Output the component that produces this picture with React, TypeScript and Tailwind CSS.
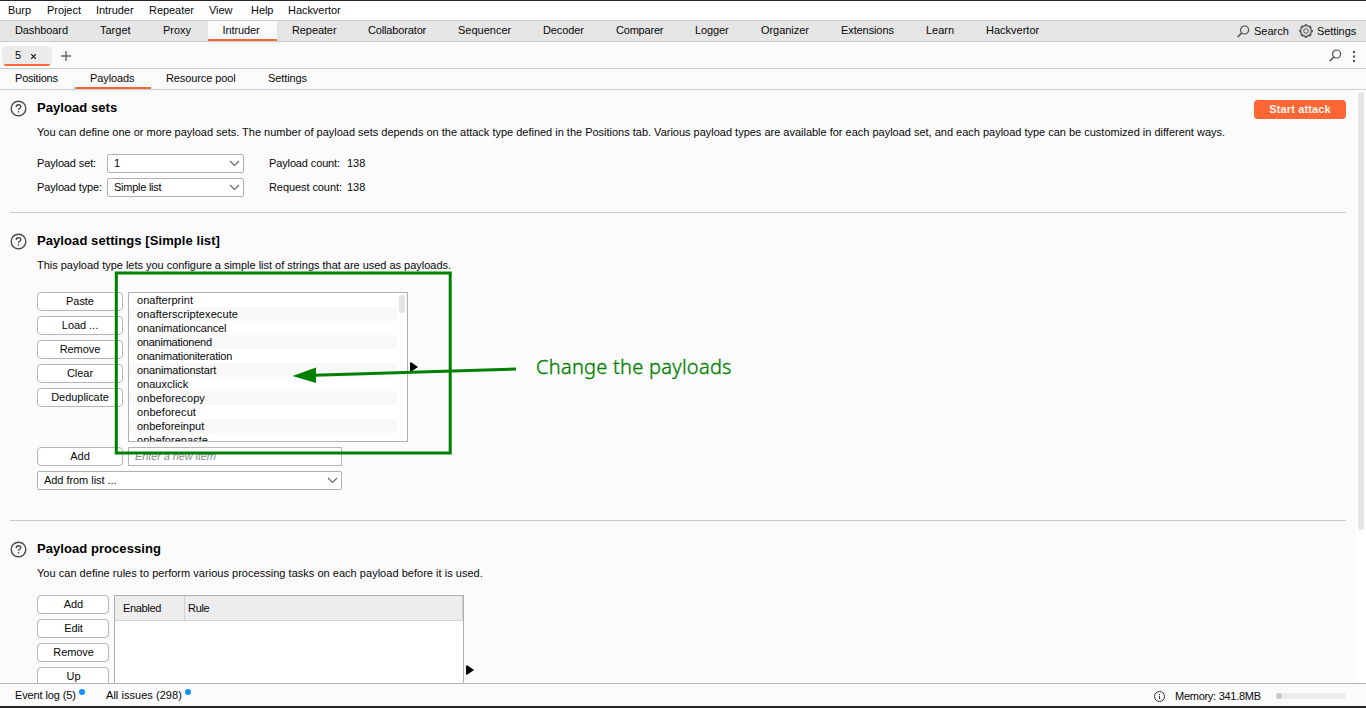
import React from 'react';

const menu: [string, string][] = [
  ['Burp', 'w-[39px]'], ['Project', 'w-[49px]'], ['Intruder', 'w-[53px]'], ['Repeater', 'w-[60px]'],
  ['View', 'w-[42px]'], ['Help', 'w-[37px]'], ['Hackvertor', 'w-[60px]'],
];

const tools: [string, string][] = [
  ['Dashboard', 'w-[84px] pl-[14px] tracking-[-0.1px]'], ['Target', 'w-[63px] pl-[15px]'], ['Proxy', 'w-[60px] pl-[15px]'],
  ['Intruder', 'w-[69px] pl-[14.5px] tracking-[-0.1px]'], ['Repeater', 'w-[76px] pl-[15px] tracking-[-0.1px]'],
  ['Collaborator', 'w-[90px] pl-[15px] tracking-[-0.15px]'], ['Sequencer', 'w-[85px] pl-[15px]'],
  ['Decoder', 'w-[73px] pl-[15px] tracking-[-0.1px]'], ['Comparer', 'w-[79px] pl-[15px] tracking-[-0.2px]'],
  ['Logger', 'w-[66px] pl-[15px] tracking-[-0.1px]'], ['Organizer', 'w-[80px] pl-[15px] tracking-[-0.05px]'],
  ['Extensions', 'w-[85px] pl-[15px] tracking-[-0.1px]'], ['Learn', 'w-[60px] pl-[15px]'],
  ['Hackvertor', 'w-[85px] pl-[15px]'],
];

const payloads: [string, string][] = [
  ['onafterprint', 'tracking-[0.03px]'], ['onafterscriptexecute', 'tracking-[0.1px]'],
  ['onanimationcancel', 'tracking-[-0.14px]'], ['onanimationend', 'tracking-[-0.25px]'],
  ['onanimationiteration', 'tracking-[-0.2px]'], ['onanimationstart', 'tracking-[-0.13px]'],
  ['onauxclick', ''], ['onbeforecopy', 'tracking-[0.11px]'], ['onbeforecut', 'tracking-[0.08px]'],
  ['onbeforeinput', ''], ['onbeforepaste', 'tracking-[0.05px]'],
];

function Magnifier({ className = '' }: { className?: string }) {
  return (
    <svg className={className} width="13" height="13" viewBox="0 0 13 13" fill="none" stroke="#4a4a4a" strokeWidth="1.2">
      <circle cx="7.6" cy="5" r="4" />
      <path d="M4.7 7.9L0.7 12" strokeWidth="1.5" />
    </svg>
  );
}

function Gear() {
  const teeth = [0, 45, 90, 135, 180, 225, 270, 315];
  return (
    <svg width="14" height="14" viewBox="-7 -7 14 14" fill="none" stroke="#555" strokeWidth="1">
      <circle r="5.3" strokeWidth="1.2" />
      <circle r="2.3" />
      {teeth.map((a) => <path key={a} d="M-1.3 -5.4L-1 -6.3H1L1.3 -5.4" transform={`rotate(${a})`} />)}
    </svg>
  );
}

function HelpIcon() {
  return (
    <svg className="mt-[3px] shrink-0" width="17" height="17" viewBox="0 0 17 17" fill="none" stroke="#4a4a4a" strokeWidth="1.4">
      <circle cx="8.5" cy="8.5" r="7.3" />
      <path d="M6.2 6.9C6.2 5.4 7.2 4.7 8.5 4.7S10.8 5.5 10.8 6.8C10.8 8.3 8.5 8.3 8.5 9.9" />
      <path d="M8.5 11.1V12.5" />
    </svg>
  );
}

function Chevron() {
  return (
    <svg width="11" height="7" viewBox="0 0 11 7" fill="none" stroke="#666" strokeWidth="1.1">
      <path d="M1 1L5.5 5.5L10 1" />
    </svg>
  );
}

function Select({ text, className }: { text: string; className: string }) {
  return (
    <div className={`flex h-[19px] items-center justify-between rounded-[2px] border border-[#b4afb1] bg-white pr-[3px] pl-[6px] ${className}`}>
      <span className="-mt-[2px]">{text}</span>
      <Chevron />
    </div>
  );
}

function Button({ text, className }: { text: string; className: string }) {
  return (
    <button className={`flex h-[19px] shrink-0 items-center justify-center rounded-[4px] border border-[#b5b5b5] bg-white pb-px ${className}`}>
      {text}
    </button>
  );
}

function Section({ title, note, titleClass, noteClass, className, children }: {
  title: string; note: string; titleClass: string; noteClass: string; className: string; children: React.ReactNode;
}) {
  return (
    <section className={`ml-[10px] flex w-[1336px] shrink-0 ${className}`}>
      <HelpIcon />
      <div className="ml-[10px] flex-1">
        <h2 className={`mt-[3px] h-4 text-[13px] leading-4 font-bold text-black ${titleClass}`}>{title}</h2>
        <p className={`mt-[10px] h-3 leading-3 ${noteClass}`}>{note}</p>
        {children}
      </div>
    </section>
  );
}

function Expander({ className }: { className: string }) {
  return (
    <svg className={className} width="9" height="10" viewBox="0 0 9 10" fill="#000">
      <path d="M0 0.5H1.5L8 5L1.5 9.5H0Z" />
    </svg>
  );
}

export default function App() {
  return (
    <div className="relative flex h-[708px] w-[1366px] flex-col overflow-hidden border-t border-b-2 border-t-[#29252a] border-b-[#242424] bg-[#fbfbfb] font-['Liberation_Sans',sans-serif] text-[11px] leading-3 whitespace-pre text-[#080808]">
      <nav className="flex h-5 shrink-0 items-start border-b border-[#c8cccc] bg-white pt-[3px] pl-2 tracking-[-0.05px]">
        {menu.map(([t, w]) => <span key={t} className={w}>{t}</span>)}
      </nav>

      <nav className="flex h-[21px] shrink-0 border-b border-[#c8cccc] bg-[#e5e5e5]">
        <div className="flex flex-1 pl-px">
          {tools.map(([t, w], i) => (
            <div key={t + i} className={`h-5 pt-[3px] ${w} ${t === 'Intruder' ? 'border-b-2 border-[#ff6633] bg-[#fbfbfb]' : ''}`}>{t}</div>
          ))}
        </div>
        <div className="flex h-5 items-center">
          <Magnifier className="mr-1" />
          <span className="w-[45px]">Search</span>
          <Gear />
          <span className="ml-1 w-[49px] tracking-[-0.08px]">Settings</span>
        </div>
      </nav>

      <div className="flex h-[27px] shrink-0 items-start border-b border-[#c8cccc] pl-[2px]">
        <div className="mt-1 flex h-5 w-[50px] flex-col rounded-[6px] bg-[#ebebeb]">
          <div className="flex h-[18px] items-center pl-[13px]">
            <span className="w-[16px]">5</span>
            <svg className="mt-[2px]" width="5" height="5" viewBox="0 0 5 5" stroke="#111" strokeWidth="1.1"><path d="M0 0L5 5M5 0L0 5" /></svg>
          </div>
          <div className="mx-[2px] h-[2px] shrink-0 rounded-b-[2px] bg-[#ff6633]" />
        </div>
        <svg className="mt-[9px] ml-[9px]" width="10" height="10" viewBox="0 0 10 10" stroke="#666" strokeWidth="1.4"><path d="M0 5H10M5 0V10" /></svg>
        <div className="mt-[7px] ml-auto flex items-center pr-[10px]">
          <Magnifier />
          <svg className="mt-px ml-[11px]" width="3" height="11" viewBox="0 0 3 11" fill="#444"><path d="M0 0h2v2h-2zM0 4.5h2v2h-2zM0 9h2v2h-2z" /></svg>
        </div>
      </div>

      <nav className="flex h-[21px] shrink-0 border-b border-[#c8cccc] tracking-[-0.1px]">
        <span className="h-5 w-[75px] pt-[3px] pl-[15px] tracking-[-0.2px]">Positions</span>
        <span className="h-5 w-[76px] border-b-2 border-[#ff6633] pt-[3px] pl-[15px]">Payloads</span>
        <span className="h-5 w-[102px] pt-[3px] pl-[15px]">Resource pool</span>
        <span className="h-5 pt-[3px] pl-[15px]">Settings</span>
      </nav>

      <div className="flex h-[593px] shrink-0 overflow-hidden">
        <main className="flex w-[1356px] shrink-0 flex-col">
          <div className="flex h-[122px] shrink-0">
            <Section
              title="Payload sets"
              note="You can define one or more payload sets. The number of payload sets depends on the attack type defined in the Positions tab. Various payload types are available for each payload set, and each payload type can be customized in different ways."
              titleClass="tracking-[0.06px]"
              noteClass="tracking-[-0.009px]"
              className="mt-[7px]"
            >
              <div className="mt-[16px] grid w-[400px] grid-cols-[70px_162px_78px_40px] items-center gap-y-[5px]">
                <span className="-mt-[2px] tracking-[-0.13px]">Payload set:</span><Select text="1" className="w-[137px]" /><span className="-mt-[2px] tracking-[-0.13px]">Payload count:</span><span className="-mt-[2px]">138</span>
                <span className="-mt-[2px] tracking-[-0.13px]">Payload type:</span><Select text="Simple list" className="w-[137px] tracking-[-0.25px]" /><span className="-mt-[2px] tracking-[-0.08px]">Request count:</span><span className="-mt-[2px]">138</span>
              </div>
            </Section>
            <button className="mt-[10px] -ml-[92px] h-[19px] w-[92px] shrink-0 rounded-[4px] bg-[#ff6633] pb-px font-bold tracking-[0.15px] text-[#fff3ee]">Start attack</button>
          </div>
          <hr className="ml-[10px] w-[1336px] shrink-0 border-[#c9c9c9]" />

          <Section
            title="Payload settings [Simple list]"
            note="This payload type lets you configure a simple list of strings that are used as payloads."
            titleClass="tracking-[0.08px]"
            noteClass="tracking-[-0.02px]"
            className="mt-[17px] h-[290px]"
          >
            <div className="mt-[21px] flex">
              <div className="flex w-[91px] flex-col gap-[5px]">
                {['Paste', 'Load ...', 'Remove', 'Clear', 'Deduplicate'].map((t) => <Button key={t} text={t} className="w-[86px] tracking-[-0.05px]" />)}
              </div>
              <div className="flex h-[150px] w-[280px] overflow-hidden border border-[#b0b0b0] bg-white">
                <ul className="w-[268px] shrink-0">
                  {payloads.map(([p, c]) => <li key={p} className={`h-[14px] pt-px pl-2 even:bg-[#f8f8f8] ${c}`}>{p}</li>)}
                </ul>
                <div className="mt-[2px] ml-[2px] h-[18px] w-[6px] rounded-full bg-[#e4e4e4]" />
              </div>
              <Expander className="mt-[70px] ml-[2px]" />
            </div>
            <div className="mt-[5px] flex gap-[5px]">
              <Button text="Add" className="w-[86px]" />
              <div className="h-[19px] w-[214px] border border-[#b5b5b5] bg-white pt-[2px] pl-[6px] tracking-[-0.1px] text-[#8c8c8c] italic">Enter a new item</div>
            </div>
            <Select text="Add from list ..." className="mt-[5px] w-[305px] tracking-[-0.05px]" />
          </Section>
          <hr className="ml-[10px] w-[1336px] shrink-0 border-[#c9c9c9]" />

          <Section
            title="Payload processing"
            note="You can define rules to perform various processing tasks on each payload before it is used."
            titleClass="tracking-[0.06px]"
            noteClass="tracking-[0.025px]"
            className="mt-[17px]"
          >
            <div className="mt-[16px] flex">
              <div className="flex w-[77px] flex-col gap-[5px]">
                {['Add', 'Edit', 'Remove', 'Up'].map((t) => <Button key={t} text={t} className="w-[72px] pl-px tracking-[-0.1px]" />)}
              </div>
              <div className="h-[120px] w-[350px] border border-[#b0b0b0] bg-white">
                <div className="flex h-[25px] border-r border-b border-[#d0d0d0] bg-[#ededed] pt-[6px]">
                  <span className="-mt-[6px] w-[70px] border-r border-[#d0d0d0] pt-[6px] pl-2 tracking-[-0.35px]">Enabled</span>
                  <span className="pl-[3px] tracking-[-0.3px]">Rule</span>
                </div>
              </div>
              <Expander className="mt-[70px] ml-[2px]" />
            </div>
          </Section>
        </main>
        <div className="w-[10px] bg-white pt-[2px] pl-[2px]">
          <div className="h-[438px] w-[6px] rounded-full bg-[#e4e4e4]" />
        </div>
      </div>

      <footer className="flex h-[23px] shrink-0 items-start border-t border-[#b4b4b4] pl-[15px]">
        <span className="mt-[5px] w-[64px] tracking-[-0.12px]">Event log (5)</span>
        <i className="mt-[5px] h-[6px] w-[6px] rounded-full bg-[#0a93ff]" />
        <span className="mt-[5px] ml-[21px] w-[79px] tracking-[0.04px]">All issues (298)</span>
        <i className="mt-[5px] h-[6px] w-[6px] rounded-full bg-[#0a93ff]" />
        <div className="ml-auto flex pr-5">
          <svg className="mt-[7px]" width="11" height="11" viewBox="0 0 11 11" fill="none" stroke="#333" strokeWidth="1"><circle cx="5.5" cy="5.5" r="5" /><path d="M5.5 4.8V8.2M5.5 2.8V3.9" /></svg>
          <span className="mt-[6px] ml-[10px] w-[101px] tracking-[-0.27px]">Memory: 341.8MB</span>
          <div className="mt-[9px] h-[6px] w-[70px] rounded-full bg-[#ececec]"><div className="h-[6px] w-[6px] rounded-full bg-[#c8c8c8]" /></div>
        </div>
      </footer>

      <svg className="absolute top-[-1px] left-0" width="540" height="480" viewBox="0 0 540 480" fill="none" stroke="#008000">
        <rect x="116.3" y="273" width="333.9" height="180" strokeWidth="3" />
        <path d="M516 369L314 375.2" strokeWidth="3" />
        <path d="M292.5 376L316 367.5V383Z" fill="#008000" stroke="none" />
      </svg>
      <span className="absolute top-[352px] left-[536px] font-['Noto_Sans',sans-serif] text-[20px] leading-7 font-light tracking-[0.26px] text-[#008000] [-webkit-text-stroke:0.35px_#008000]">Change the payloads</span>
    </div>
  );
}
